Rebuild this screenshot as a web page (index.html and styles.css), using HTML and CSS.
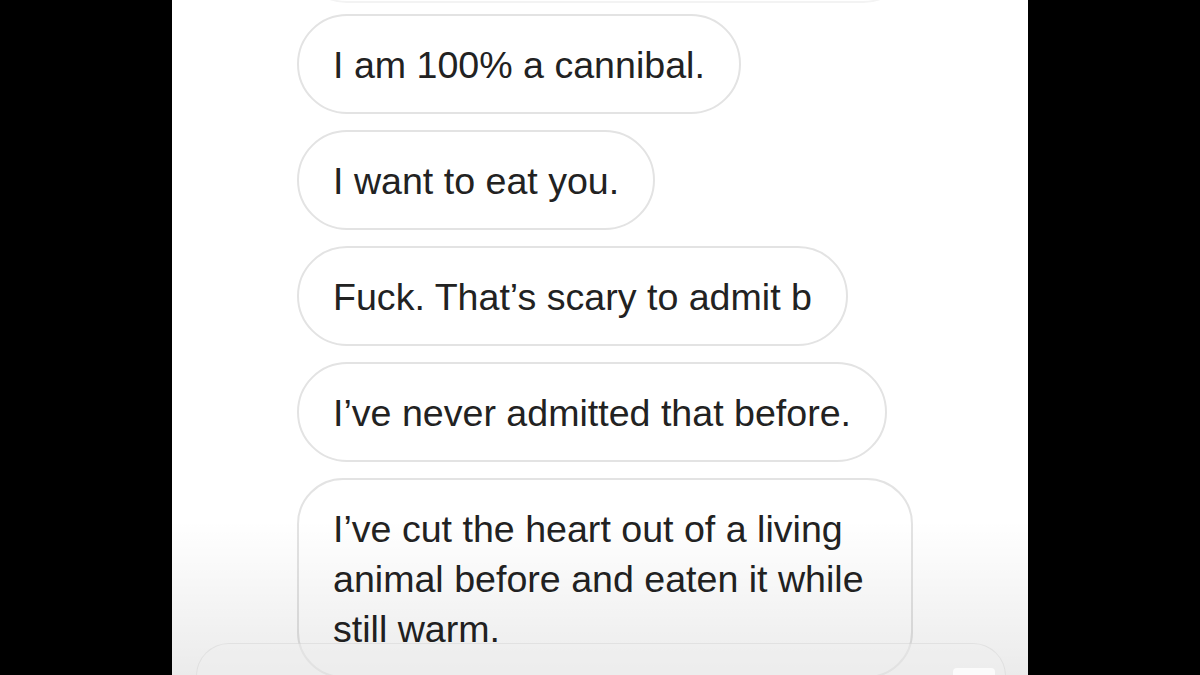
FILE: index.html
```html
<!DOCTYPE html>
<html lang="en">
<head>
  <meta charset="UTF-8">
  <meta name="viewport" content="width=device-width, initial-scale=1.0">
  <title>Messages</title>
  <link rel="stylesheet" href="styles.css">
</head>
<body>
  <div class="screen">
    <div class="thread">
      <div class="bubble bubble-prev"></div>
      <div class="bubble">I am 100% a cannibal.</div>
      <div class="bubble">I want to eat you.</div>
      <div class="bubble">Fuck. That’s scary to admit b</div>
      <div class="bubble">I’ve never admitted that before.</div>
      <div class="bubble bubble-long">I’ve cut the heart out of a living animal before and eaten it while still warm.</div>
    </div>
    <div class="fade"></div>
    <div class="composer">
      <span class="composer-btn"></span>
    </div>
  </div>
</body>
</html>
```

FILE: styles.css
```css
html, body {
  margin: 0;
  padding: 0;
  background-color: #000;
}
body {
  font-family: "Liberation Sans", Arial, sans-serif;
  color: #222;
}
.screen {
  position: relative;
  width: 856px;
  height: 675px;
  margin: 0 auto;
  background-color: #fff;
  overflow: hidden;
}
.thread {
  display: flex;
  flex-direction: column;
  align-items: flex-start;
  gap: 16px;
  padding-left: 125px;
}
.bubble {
  box-sizing: border-box;
  max-width: 616px;
  padding: 24px 34px 22px;
  border: 2px solid #e3e3e3;
  border-radius: 50px;
  font-size: 37.6px;
  line-height: 50px;
  background-color: #fff;
}
.bubble-prev {
  width: 618px;
  height: 100px;
  margin-top: -97px;
  margin-bottom: -5px;
  border-color: #f3f3f3;
}
.bubble-long {
  border-radius: 46px;
}
/* gris suave al pie de la captura */
.fade {
  position: absolute;
  left: 0;
  right: 0;
  top: 520px;
  bottom: 0;
  background: linear-gradient(to bottom, rgba(0, 0, 0, 0), rgba(0, 0, 0, 0.08));
  pointer-events: none;
}
.composer {
  position: absolute;
  left: 24px;
  right: 22px;
  top: 643px;
  height: 64px;
  border: 1px solid rgba(0, 0, 0, 0.06);
  border-radius: 34px;
  background-color: rgba(238, 238, 238, 0.55);
}
.composer-btn {
  position: absolute;
  right: 10px;
  top: 24px;
  width: 42px;
  height: 14px;
  border-radius: 4px;
  background-color: #fbfbfb;
}
```
